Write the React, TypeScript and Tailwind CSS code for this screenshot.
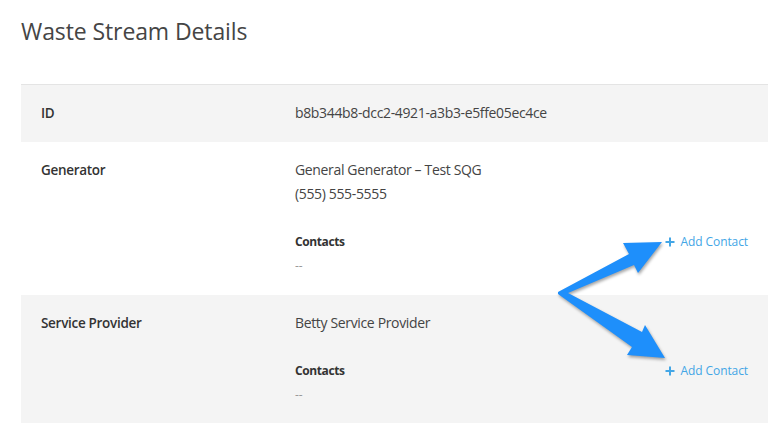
import React from "react";

type Row = {
  label: string;
  lines: string[];
  contacts?: boolean;
  shaded: boolean;
};

const rows: Row[] = [
  { label: "ID", lines: ["b8b344b8-dcc2-4921-a3b3-e5ffe05ec4ce"], shaded: true },
  {
    label: "Generator",
    lines: ["General Generator – Test SQG", "(555) 555-5555"],
    contacts: true,
    shaded: false,
  },
  { label: "Service Provider", lines: ["Betty Service Provider"], contacts: true, shaded: true },
];

const PlusIcon = () => (
  <svg width="10" height="10" viewBox="0 0 10 10" className="mr-[6px]">
    <path d="M5 0.5v9M0.5 5h9" stroke="currentColor" strokeWidth="2" />
  </svg>
);

const Arrows = () => (
  <svg
    className="pointer-events-none absolute left-0 top-0"
    width="778"
    height="423"
    viewBox="0 0 778 423"
    style={{ filter: "drop-shadow(1px 2px 1.5px rgba(0,0,0,0.35))" }}
  >
    <polygon
      fill="#1e8ffb"
      points="558,292 629,254 623,243 662,242 638,273 634,265 568,293 642,332 645,325 665,358 627,355 632,347 558,294"
    />
  </svg>
);

export default function App() {
  return (
    <div
      className="relative h-[423px] w-[778px] overflow-hidden bg-white pl-[21px] pr-[10px]"
      style={{ fontFamily: '"Open Sans", "Noto Sans", sans-serif' }}
    >
      <h1 className="pt-[15px] text-[23px] leading-8 tracking-[-0.1px] text-[#454545]">
        Waste Stream Details
      </h1>
      <div className="mt-[37px] border-t border-[#e4e4e4]">
        {rows.map((row) => (
          <div
            key={row.label}
            className={`flex pb-[17px] pl-5 pr-5 pt-4 ${row.shaded ? "bg-[#f4f4f4]" : "bg-white"}`}
          >
            <div className="w-[254px] shrink-0 text-[13.5px] font-semibold leading-6 tracking-[-0.3px] text-[#333]">
              {row.label}
            </div>
            <div className="flex-1">
              {row.lines.map((l) => (
                <div key={l} className="text-[14px] leading-6 tracking-[-0.35px] text-[#444]">
                  {l}
                </div>
              ))}
              {row.contacts && (
                <div className="mt-6 flex items-start justify-between">
                  <div>
                    <div className="text-[12px] font-bold leading-6 tracking-[-0.4px] text-[#333]">
                      Contacts
                    </div>
                    <div className="text-[12px] leading-6 text-[#999]">--</div>
                  </div>
                  <a
                    className="flex items-center text-[12px] leading-6 tracking-[-0.1px] text-[#43a6e6]"
                    href="#"
                  >
                    <PlusIcon />
                    Add Contact
                  </a>
                </div>
              )}
            </div>
          </div>
        ))}
      </div>
      <Arrows />
    </div>
  );
}
